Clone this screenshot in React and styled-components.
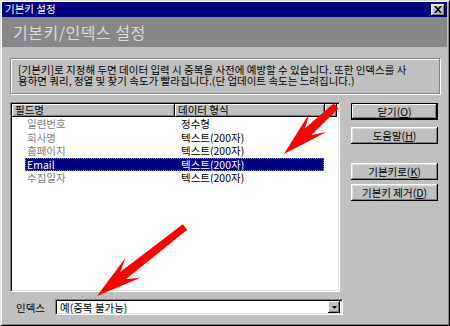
import React from 'react'
import styled, { createGlobalStyle } from 'styled-components'

const GlobalStyle = createGlobalStyle`
    html, body {
        margin: 0;
        padding: 0;
        background: #c0c0c0;
    }
    * {
        box-sizing: border-box;
    }
`;

const FONT = `"Noto Sans CJK KR", "Noto Sans", sans-serif`;

const rows = [
    { name: "일련번호", type: "정수형" },
    { name: "회사명", type: "텍스트(200자)" },
    { name: "홈페이지", type: "텍스트(200자)" },
    { name: "Email", type: "텍스트(200자)", selected: true },
    { name: "수집일자", type: "텍스트(200자)" },
];

// red callout arrow: shaft from tail to tip, swept-back head
const arrowPoints = (tail, tip) => {
    const dx = tail[0] - tip[0];
    const dy = tail[1] - tip[1];
    const len = Math.hypot(dx, dy);
    const bx = dx / len, by = dy / len;
    const px = -by, py = bx;
    const pt = (b, p) => `${(tip[0] + bx * b + px * p).toFixed(1)},${(tip[1] + by * b + py * p).toFixed(1)}`;
    return [
        pt(0, 0),
        pt(46, -12.5),
        pt(33, -4.5),
        pt(len, -3.5),
        pt(len, 3.5),
        pt(33, 4.5),
        pt(46, 12.5),
    ].join(' ');
}

const App = () => {
    return (
        <>
            <GlobalStyle />
            <Window>
                <TitleBar>
                    <span>기본키 설정</span>
                    <CloseButton>
                        <svg width="8" height="7" viewBox="0 0 8 7">
                            <path d="M0 0h2l2 2.2L6 0h2L5 3.5 8 7H6L4 4.8 2 7H0l3-3.5z" fill="#000" />
                        </svg>
                    </CloseButton>
                </TitleBar>
                <Header>기본키/인덱스 설정</Header>
                <Body>
                    <InfoBox>
                        <InfoLine>[기본키]로 지정해 두면 데이터 입력 시 중복을 사전에 예방할 수 있습니다. 또한 인덱스를 사</InfoLine>
                        <InfoLine>용하면 쿼리, 정열 및 찾기 속도가 빨라집니다.(단 업데이트 속도는 느려집니다.)</InfoLine>
                    </InfoBox>
                    <Middle>
                        <ListView>
                            <ListHeader>
                                <HeaderCell $width={163}>필드명</HeaderCell>
                                <HeaderCell $width={150}>데이터 형식</HeaderCell>
                                <HeaderCell $width={12} />
                            </ListHeader>
                            {rows.map(row => (
                                <Row key={row.name} $selected={row.selected}>
                                    <NameCell $selected={row.selected}>{row.name}</NameCell>
                                    <TypeCell>{row.type}</TypeCell>
                                </Row>
                            ))}
                        </ListView>
                        <ButtonColumn>
                            <Button $default>닫기(<u>O</u>)</Button>
                            <Button $gap={7}>도움말(<u>H</u>)</Button>
                            <Button $gap={19}>기본키로(<u>K</u>)</Button>
                            <Button $gap={4}>기본키 제거(<u>D</u>)</Button>
                        </ButtonColumn>
                    </Middle>
                    <IndexRow>
                        <Label>인덱스</Label>
                        <Combo>
                            <span>예(중복 불가능)</span>
                            <DropButton>
                                <svg width="5" height="3" viewBox="0 0 5 3">
                                    <path d="M0 0h5L2.5 3z" fill="#000" />
                                </svg>
                            </DropButton>
                        </Combo>
                    </IndexRow>
                </Body>
                <Overlay viewBox="0 0 450 326" width="450" height="326">
                    <polygon points={arrowPoints([336, 106], [284, 154])} fill="#ff0000" />
                    <polygon points={arrowPoints([185, 227], [97, 296])} fill="#ff0000" />
                </Overlay>
            </Window>
        </>
    )
}

const Window = styled.div`
    position: relative;
    width: 450px;
    height: 326px;
    display: flex;
    flex-direction: column;
    background: #c0c0c0;
    border: 1px solid;
    border-color: #dfdfdf #000 #000 #dfdfdf;
    box-shadow: inset 1px 1px #fff, inset -1px -1px #808080;
    padding: 1px 2px 2px 1px;
    font-family: ${FONT};
    overflow: hidden;
`;

const TitleBar = styled.div`
    height: 15px;
    flex-shrink: 0;
    display: flex;
    align-items: center;
    justify-content: space-between;
    padding: 0 2px 0 3px;
    background: #000080;
    color: #fff;
    font-size: 10.5px;
    line-height: 1;
`;

const CloseButton = styled.div`
    width: 14px;
    height: 12px;
    display: flex;
    align-items: center;
    justify-content: center;
    background: #c0c0c0;
    box-shadow: inset -1px -1px #000, inset 1px 1px #fff, inset -2px -2px #808080, inset 2px 2px #dfdfdf;
`;

const Header = styled.div`
    height: 30px;
    flex-shrink: 0;
    display: flex;
    align-items: center;
    padding-left: 11px;
    background: #878787;
    color: #dcdcdc;
    font-size: 16px;
    letter-spacing: 0.5px;
`;

const Body = styled.div`
    flex: 1;
    display: flex;
    flex-direction: column;
    padding: 11px 7px 0 8px;
`;

const InfoBox = styled.div`
    height: 36px;
    display: flex;
    flex-direction: column;
    padding: 6px 0 0 7px;
    border: 1px solid #808080;
    box-shadow: inset 1px 1px #fff, 1px 1px #fff;
    font-size: 10.5px;
    color: #000;
    white-space: nowrap;
`;

const InfoLine = styled.div`
    height: 10.5px;
    line-height: 10.5px;
`;

const Middle = styled.div`
    display: flex;
    gap: 11px;
    margin-top: 8px;
`;

const ListView = styled.div`
    width: 330px;
    height: 190px;
    background: #fff;
    border: 1px solid;
    border-color: #808080 #fff #fff #808080;
    box-shadow: inset 1px 1px #000, inset -1px -1px #dfdfdf;
    padding: 1px;
    font-size: 10.5px;
    line-height: 13px;
`;

const ListHeader = styled.div`
    display: flex;
    height: 13px;
`;

const HeaderCell = styled.div`
    width: ${p => p.$width}px;
    flex-shrink: 0;
    padding-left: 3px;
    background: #c0c0c0;
    color: #000;
    line-height: 12px;
    box-shadow: inset -1px -1px #000, inset 1px 1px #fff, inset -2px -2px #808080;
`;

const Row = styled.div`
    display: flex;
    align-items: center;
    height: 13.5px;
    margin-left: 13px;
    width: 299px;
    background: ${p => p.$selected ? '#000080' : 'transparent'};
    color: ${p => p.$selected ? '#fff' : '#000'};
    outline: ${p => p.$selected ? '1px dotted #8a8a50' : 'none'};
    outline-offset: -1px;
`;

const NameCell = styled.div`
    width: 150px;
    padding-left: 2px;
    color: ${p => p.$selected ? '#fff' : '#808080'};
`;

const TypeCell = styled.div`
    padding-left: 6px;
`;

const ButtonColumn = styled.div`
    width: 87px;
    display: flex;
    flex-direction: column;
    padding-top: 1px;
`;

const Button = styled.div`
    height: 17px;
    margin-top: ${p => p.$gap || 0}px;
    display: flex;
    align-items: center;
    justify-content: center;
    background: #c0c0c0;
    color: #000;
    font-size: 10.5px;
    box-shadow: ${p => p.$default
        ? 'inset 0 0 0 1px #000, inset -2px -2px #000, inset 2px 2px #fff, inset -3px -3px #808080'
        : 'inset -1px -1px #000, inset 1px 1px #fff, inset -2px -2px #808080, inset 2px 2px #dfdfdf'};

    u {
        text-underline-offset: 1px;
    }
`;

const IndexRow = styled.div`
    display: flex;
    align-items: center;
    margin-top: 7px;
`;

const Label = styled.div`
    width: 45px;
    padding-left: 6px;
    font-size: 10.5px;
    color: #000;
`;

const Combo = styled.div`
    width: 288px;
    height: 16px;
    display: flex;
    align-items: center;
    justify-content: space-between;
    padding: 0 2px 0 4px;
    background: #fff;
    border: 1px solid;
    border-color: #808080 #fff #fff #808080;
    box-shadow: inset 1px 1px #000, inset -1px -1px #dfdfdf;
    font-size: 10.5px;
    color: #000;
`;

const DropButton = styled.div`
    width: 12px;
    height: 12px;
    display: flex;
    align-items: center;
    justify-content: center;
    background: #c0c0c0;
    box-shadow: inset -1px -1px #000, inset 1px 1px #fff, inset -2px -2px #808080;
`;

const Overlay = styled.svg`
    position: absolute;
    left: -1px;
    top: -1px;
    pointer-events: none;
`;

export default App;
